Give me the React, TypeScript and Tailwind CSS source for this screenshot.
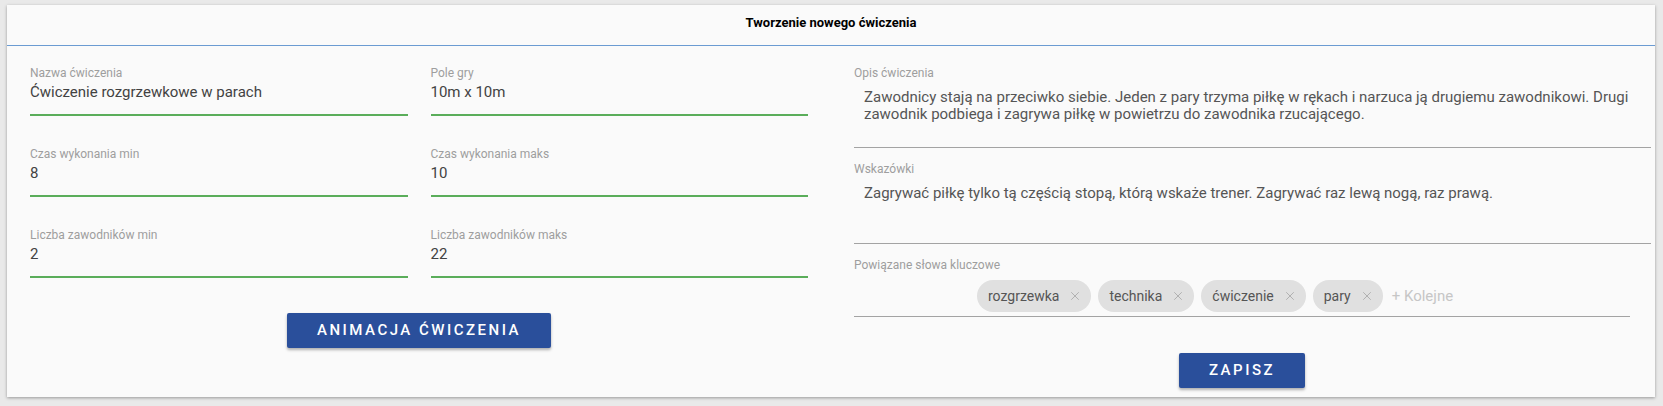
import { X } from 'lucide-react';

const leftFields = [
  { label: 'Nazwa ćwiczenia', value: 'Ćwiczenie rozgrzewkowe w parach' },
  { label: 'Pole gry', value: '10m x 10m' },
  { label: 'Czas wykonania min', value: '8' },
  { label: 'Czas wykonania maks', value: '10' },
  { label: 'Liczba zawodników min', value: '2' },
  { label: 'Liczba zawodników maks', value: '22' },
];

const keywords = ['rozgrzewka', 'technika', 'ćwiczenie', 'pary'];

function Field({ label, value }: { label: string; value: string }) {
  return (
    <div className="border-b-2 border-[#5aad5a] pb-[12px]">
      <div className="text-[12px] leading-[14px] text-[#9e9e9e]">{label}</div>
      <div className="mt-[2px] text-[15px] leading-[20px] text-[#424242]">{value}</div>
    </div>
  );
}

function TextArea({ label, text, className = '' }: { label: string; text: string; className?: string }) {
  return (
    <div className={`border-b border-[#a3a3a3] pb-[7px] ${className}`}>
      <div className="text-[12px] leading-[14px] text-[#9e9e9e]">{label}</div>
      <div className="mt-[9px] h-[51px] pl-[10px] text-[15px] leading-[17px] text-[#555]">{text}</div>
    </div>
  );
}

function Button({ children }: { children: string }) {
  return (
    <button className="h-[35px] rounded-[2px] bg-[#2a4f9b] px-[30px] text-[15px] font-medium tracking-[2.5px] text-white shadow-[0_2px_3px_rgba(0,0,0,0.3)]">
      {children}
    </button>
  );
}

export default function App() {
  return (
    <div className="h-[406px] w-[1663px] bg-[#e9e9e9] pl-[7px] pr-[8px] pt-[5px] font-['Roboto',sans-serif]">
      <div className="h-[392px] bg-[#fafafa] shadow-[0_1px_3px_rgba(0,0,0,0.35)]">
        {/* Header */}
        <div className="h-[41px] border-b border-[#6b9bd2] pt-[10px] text-center text-[13px] font-bold leading-[15px] text-black">
          Tworzenie nowego ćwiczenia
        </div>

        <div className="flex pl-[23px] pr-[4px]">
          {/* Left column */}
          <div className="w-[778px] pt-[20px]">
            <div className="grid grid-cols-2 gap-x-[23px] gap-y-[31px]">
              {leftFields.map((f) => (
                <Field key={f.label} label={f.label} value={f.value} />
              ))}
            </div>
            <div className="mt-[35px] flex justify-center">
              <Button>ANIMACJA ĆWICZENIA</Button>
            </div>
          </div>

          {/* Right column */}
          <div className="ml-[46px] flex-1 pt-[20px]">
            <TextArea
              label="Opis ćwiczenia"
              text="Zawodnicy stają na przeciwko siebie. Jeden z pary trzyma piłkę w rękach i narzuca ją drugiemu zawodnikowi. Drugi zawodnik podbiega i zagrywa piłkę w powietrzu do zawodnika rzucającego."
            />
            <TextArea
              className="mt-[14px]"
              label="Wskazówki"
              text="Zagrywać piłkę tylko tą częścią stopą, którą wskaże trener. Zagrywać raz lewą nogą, raz prawą."
            />
            <div className="mr-[21px]">
              <div className="mt-[14px] border-b border-[#a3a3a3] pb-[4px]">
                <div className="text-[12px] leading-[14px] text-[#9e9e9e]">Powiązane słowa kluczowe</div>
                <div className="ml-[123px] mt-[8px] flex items-center gap-[7px]">
                  {keywords.map((k) => (
                    <div
                      key={k}
                      className="flex h-[32px] items-center gap-[9px] rounded-full bg-[#e0e0e0] pl-[11px] pr-[9px] text-[14px] text-[#555]"
                    >
                      {k}
                      <X size={14} strokeWidth={1.5} className="text-[#aaa]" />
                    </div>
                  ))}
                  <span className="ml-[2px] text-[15px] text-[#c6c6c6]">+ Kolejne</span>
                </div>
              </div>
              <div className="mt-[36px] flex justify-center">
                <Button>ZAPISZ</Button>
              </div>
            </div>
          </div>
        </div>
      </div>
    </div>
  );
}
